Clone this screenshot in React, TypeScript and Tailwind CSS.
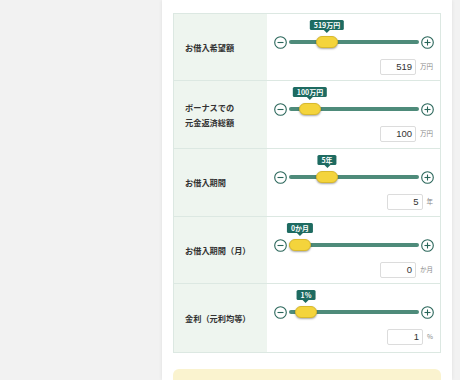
import React from "react";

type Row = {
  label: string[];
  tip: string;
  value: string;
  unit: string;
  offset: number;
  h: string;
};

const rows: Row[] = [
  { label: ["お借入希望額"], tip: "519万円", value: "519", unit: "万円", offset: 27, h: "h-[67px]" },
  { label: ["ボーナスでの", "元金返済総額"], tip: "100万円", value: "100", unit: "万円", offset: 10, h: "h-[68px]" },
  { label: ["お借入期間"], tip: "5年", value: "5", unit: "年", offset: 27, h: "h-[68px]" },
  { label: ["お借入期間（月）"], tip: "0か月", value: "0", unit: "か月", offset: 0, h: "h-[67px]" },
  { label: ["金利（元利均等）"], tip: "1%", value: "1", unit: "%", offset: 6, h: "h-[68px]" },
];

function Circle({ plus }: { plus?: boolean }) {
  return (
    <svg width="13" height="13" viewBox="0 0 13 13" className="shrink-0">
      <circle cx="6.5" cy="6.5" r="5.8" fill="white" stroke="#2a665a" strokeWidth="1.1" />
      <line x1="3.5" y1="6.5" x2="9.5" y2="6.5" stroke="#2a665a" strokeWidth="1.1" />
      {plus && <line x1="6.5" y1="3.5" x2="6.5" y2="9.5" stroke="#2a665a" strokeWidth="1.1" />}
    </svg>
  );
}

function Slider({ offset, tip }: { offset: number; tip: string }) {
  return (
    <div className="flex items-center h-[12px] pl-[7px] pr-[6px] gap-[2px]">
      <Circle />
      <div className="relative flex-1 h-[4px] rounded-full bg-[#4e8b7a]">
        <div
          className="absolute top-[-4px] w-[22px] h-[12px] rounded-full bg-[#f4d43c] border border-[#d8b92e] shadow-[0_1px_2px_rgba(0,0,0,0.35)]"
          style={{ left: offset }}
        >
          <div className="absolute left-1/2 -translate-x-1/2 bottom-[14px] flex flex-col items-center">
            <div className="bg-[#1e6b61] text-white text-[7px] font-bold leading-[10px] h-[10px] px-[4px] rounded-[1.5px] whitespace-nowrap font-['Noto_Sans_CJK_JP',sans-serif]">
              {tip}
            </div>
            <div className="w-0 h-0 border-l-[3px] border-r-[3px] border-t-[3px] border-l-transparent border-r-transparent border-t-[#1e6b61]" />
          </div>
        </div>
      </div>
      <Circle plus />
    </div>
  );
}

export default function App() {
  return (
    <div className="w-[460px] h-[380px] bg-[#f2f2f2] overflow-hidden flex font-['Noto_Sans_CJK_JP',sans-serif]">
      <div className="ml-[162px] w-[290px] h-full bg-white shadow-[0_0_4px_rgba(0,0,0,0.08)] pt-[13px] px-[11px]">
        <div className="border border-[#dce8e2]">
          {rows.map((r, i) => (
            <div
              key={i}
              className={`flex ${r.h} ${i < rows.length - 1 ? "border-b border-[#dce8e2]" : ""}`}
            >
              <div className="w-[93px] bg-[#eef5ef] flex flex-col justify-center pl-[11px] text-[8.2px] leading-[15px] font-semibold text-[#333]">
                {r.label.map((l, j) => (
                  <div key={j}>{l}</div>
                ))}
              </div>
              <div className="flex-1 flex flex-col pt-[22px]">
                <Slider offset={r.offset} tip={r.tip} />
                <div className="mt-[11px] flex items-center justify-end gap-[4px] pr-[7px]">
                  <div className="w-[36px] h-[16px] border border-[#dcdcdc] rounded-[2px] flex items-center justify-end pr-[3px] text-[9.5px] text-[#333] font-['Liberation_Sans',sans-serif]">
                    {r.value}
                  </div>
                  <div className="text-[6.5px] text-[#888]">{r.unit}</div>
                </div>
              </div>
            </div>
          ))}
        </div>
        <div className="mt-[16px] h-[40px] rounded-[6px] bg-[#faf3cf]" />
      </div>
    </div>
  );
}
